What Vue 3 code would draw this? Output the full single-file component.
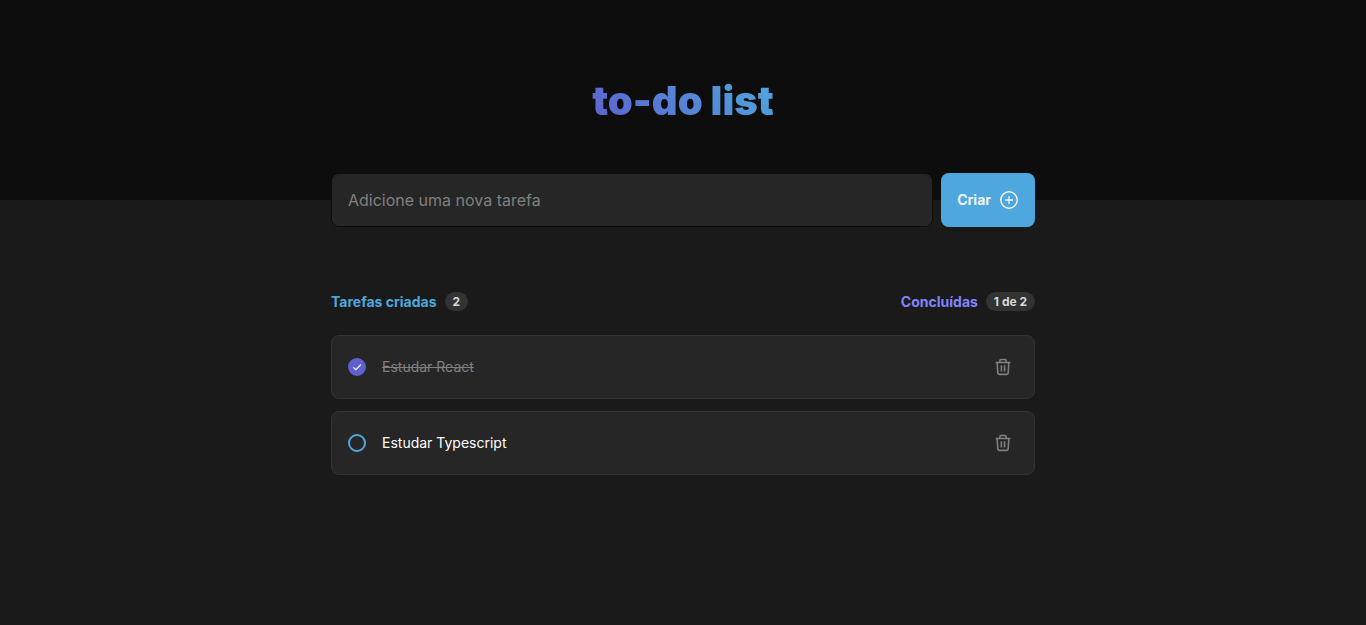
<script setup>
import { computed, ref } from 'vue'

const draft = ref('')
const tasks = ref([
  { id: 1, title: 'Estudar React', done: true },
  { id: 2, title: 'Estudar Typescript', done: false },
])
const doneCount = computed(() => tasks.value.filter((t) => t.done).length)

function addTask() {
  const title = draft.value.trim()
  if (!title) return
  tasks.value.push({ id: Date.now(), title, done: false })
  draft.value = ''
}

function removeTask(id) {
  tasks.value = tasks.value.filter((t) => t.id !== id)
}
</script>

<template>
  <div class="page">
    <header class="hero">
      <h1 class="title">to-do list</h1>
    </header>

    <main class="content">
      <form class="new-task" @submit.prevent="addTask">
        <input
          v-model="draft"
          class="field"
          type="text"
          aria-label="Adicione uma nova tarefa"
          placeholder="Adicione uma nova tarefa"
        />
        <button class="create" type="submit">
          <span>Criar</span>
          <svg width="20" height="20" viewBox="0 0 20 20" fill="none" stroke="currentColor" aria-hidden="true">
            <circle cx="10" cy="10" r="8.2" stroke-width="1.5" />
            <path d="M10 6v8M6 10h8" stroke-width="1.3" />
          </svg>
        </button>
      </form>

      <section class="tasks">
        <div class="summary">
          <p class="count created">Tarefas criadas <span class="badge">{{ tasks.length }}</span></p>
          <p class="count finished">Concluídas <span class="badge">{{ doneCount }} de {{ tasks.length }}</span></p>
        </div>

        <ul class="list">
          <li v-for="task in tasks" :key="task.id" class="card">
            <label class="task" :class="{ done: task.done }">
              <span class="tick">
                <input v-model="task.done" class="box" type="checkbox" />
                <svg v-if="task.done" class="mark" viewBox="0 0 18 18" fill="none" aria-hidden="true">
                  <path d="M5.2 9.2 7.9 11.6 12.9 6.5" stroke="#f2f2f2" stroke-width="1.2" />
                </svg>
              </span>
              <span>{{ task.title }}</span>
            </label>
            <button class="remove" type="button" :aria-label="`Remover ${task.title}`" @click="removeTask(task.id)">
              <svg width="16" height="18" viewBox="0 0 16 18" fill="none" stroke="currentColor" stroke-width="1.6" aria-hidden="true">
                <path d="M.6 4.5h14.8M4.9 4.2V2.5q0-1 1-1h4.2q1 0 1 1v1.7" />
                <path d="M2.2 4.8 2.8 15q.1 1.4 1.5 1.4h7.4q1.4 0 1.5-1.4l.6-10.2" />
                <path d="M6.4 7.2v6.2M9.6 7.2v6.2" />
              </svg>
            </button>
          </li>
        </ul>
      </section>
    </main>
  </div>
</template>

<style>
body {
  margin: 0;
  background: #1a1a1a;
}
</style>

<style scoped>
.page {
  min-height: 100vh;
  background: #1a1a1a;
  color: #ffffff;
  font: 400 14px/20px Inter, "Liberation Sans", sans-serif;
}

.page *,
.page {
  box-sizing: border-box;
}

.hero {
  display: flex;
  align-items: center;
  justify-content: center;
  height: 200px;
  padding-top: 2px;
  background: #0d0d0d;
}

.title {
  margin: 0;
  font-size: 40px;
  line-height: 48px;
  font-weight: 900;
  color: transparent;
  background: linear-gradient(45deg, #5e60ce, #4ea8de);
  background-clip: text;
  -webkit-background-clip: text;
}

.content {
  max-width: 736px;
  margin: -27px auto 0;
  padding: 0 16px;
}

.new-task {
  display: flex;
  gap: 8px;
}

.field {
  flex: 1;
  min-width: 0;
  height: 54px;
  padding: 0 16px;
  border: 1px solid #0d0d0d;
  border-radius: 8px;
  background: #262626;
  color: #f2f2f2;
  font: inherit;
  font-size: 16px;
}

.field::placeholder {
  color: #808080;
  opacity: 1;
}

.create {
  display: flex;
  align-items: center;
  gap: 8px;
  height: 54px;
  padding: 0 16px;
  border: 0;
  border-radius: 8px;
  background: #4ea8de;
  color: #f2f2f2;
  font: inherit;
  font-weight: 700;
  cursor: pointer;
}

.tasks {
  margin-top: 64px;
}

.summary {
  display: flex;
  justify-content: space-between;
}

.count {
  display: flex;
  align-items: center;
  gap: 8px;
  margin: 0;
  font-weight: 700;
  line-height: 21px;
}

.created {
  color: #4ea8de;
}

.finished {
  color: #8284fa;
}

.badge {
  padding: 2px 8px;
  border-radius: 10px;
  background: #333333;
  color: #d9d9d9;
  font-size: 12px;
  line-height: 15px;
}

.list {
  display: grid;
  gap: 12px;
  margin: 23px 0 0;
  padding: 0;
  list-style: none;
}

.card {
  display: flex;
  align-items: center;
  justify-content: space-between;
  min-height: 64px;
  padding: 0 16px;
  border: 1px solid #333333;
  border-radius: 8px;
  background: #262626;
}

.task {
  display: flex;
  align-items: center;
  gap: 16px;
  cursor: pointer;
}

.done {
  color: #808080;
  text-decoration: line-through;
}

.tick {
  display: grid;
  width: 18px;
  height: 18px;
}

.box,
.mark {
  grid-area: 1 / 1;
  width: 18px;
  height: 18px;
}

.box {
  appearance: none;
  margin: 0;
  border: 2px solid #4ea8de;
  border-radius: 50%;
}

.box:checked {
  border-color: #5e60ce;
  background: #5e60ce;
}

.mark {
  pointer-events: none;
}

.remove {
  display: flex;
  padding: 7px;
  border: 0;
  background: none;
  color: #808080;
  cursor: pointer;
}
</style>
